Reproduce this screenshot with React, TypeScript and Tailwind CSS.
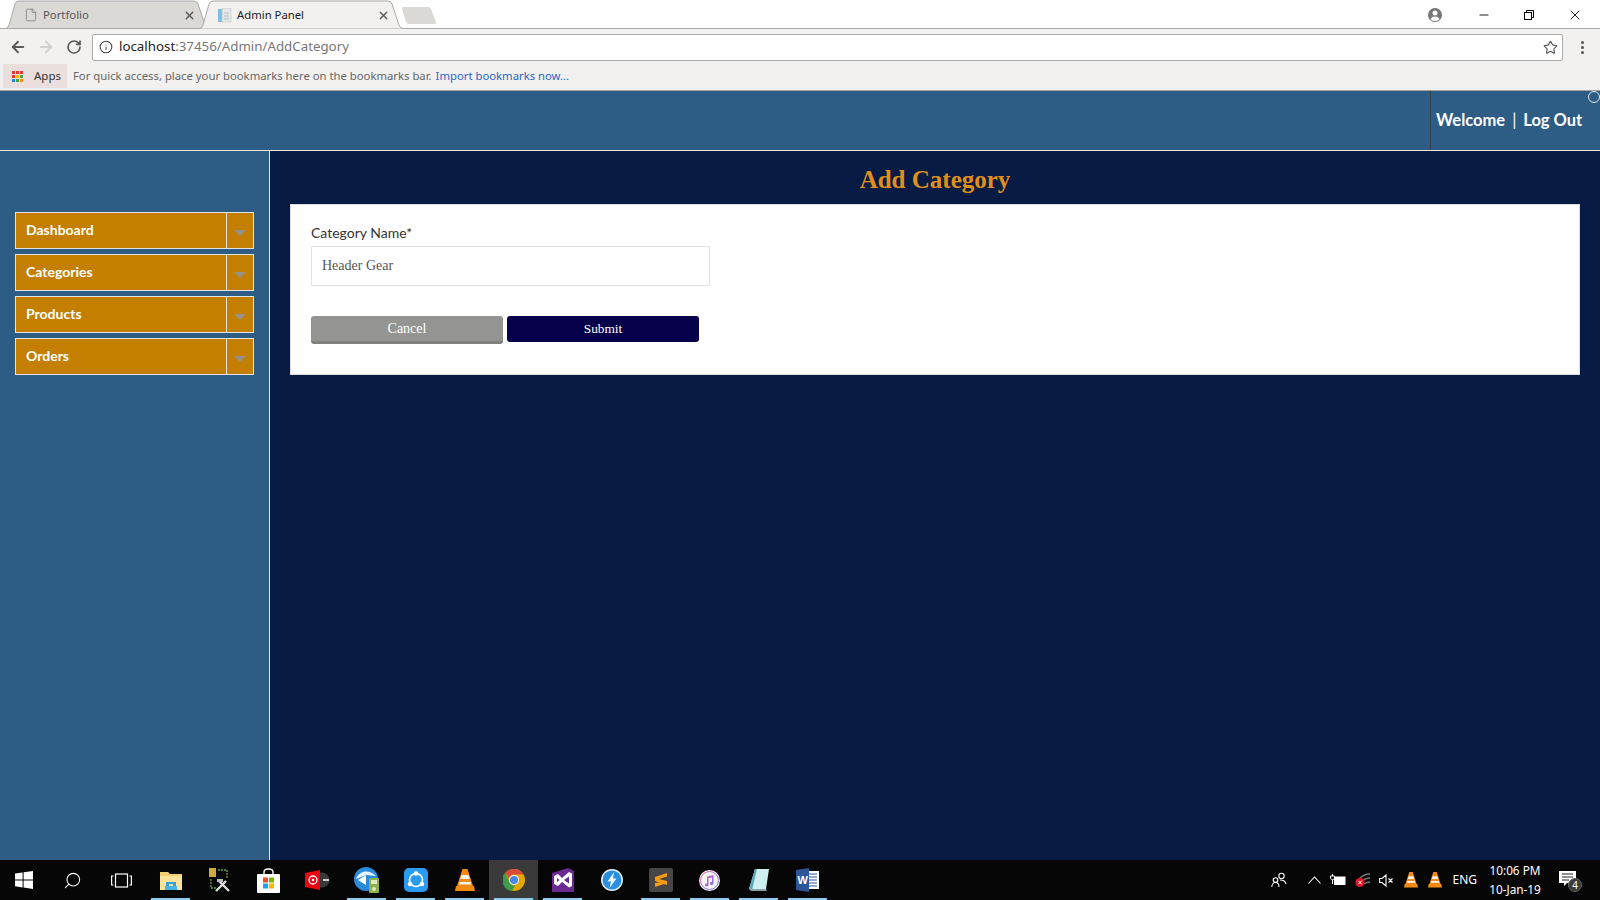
import React from "react";
import { ArrowLeft, ArrowRight, RotateCw, Info, Star, Minus, X, Search, File } from "lucide-react";

const ui = "font-['Noto_Sans','Open_Sans',sans-serif]";
const site = "font-['Lato','Noto_Sans',sans-serif]";

function TabShape({ fill, stroke }: { fill: string; stroke: string }) {
  return (
    <svg className="absolute inset-0 w-full h-full" viewBox="0 0 203 29" preserveAspectRatio="none">
      <path d="M0 28.5 Q2 28 3 25 L9 4 Q10 1 13 1 L188 1 Q191 1 192 4 L199 25 Q200 28 203 28.5" fill={fill} stroke={stroke} strokeWidth="1" />
    </svg>
  );
}

function Tab({ title, active, icon }: { title: string; active?: boolean; icon: React.ReactNode }) {
  return (
    <div className={`relative w-[203px] h-[29px] -mr-[9px] flex items-center pl-[18px] pr-[13px] pt-[1px] ${active ? "z-10" : ""}`}>
      <TabShape fill={active ? "#f2f1ef" : "#dbd9d5"} stroke="#a9a9a9" />
      <div className="relative flex items-center w-full">
        <span className="w-[19px] shrink-0">{icon}</span>
        <span className={`text-[11.3px] ${active ? "text-[#222]" : "text-[#555]"}`}>{title}</span>
        <X className="ml-auto text-[#555]" size={13} strokeWidth={2.5} />
      </div>
    </div>
  );
}

function MenuItem({ label }: { label: string }) {
  return (
    <div className="flex h-[37px] border border-[#e4e4e4] bg-[#c47f00]">
      <div className={`flex-1 flex items-center pl-[10px] text-white font-bold text-[14px] pb-[2px] ${site}`}>{label}</div>
      <div className="w-[27px] border-l border-[#e4e4e4] flex items-center justify-center pt-[4px]">
        <div className="w-0 h-0 border-l-[6px] border-r-[6px] border-t-[6px] border-l-transparent border-r-transparent border-t-[#97918a]" />
      </div>
    </div>
  );
}

function Cell({ children, active, bar }: { children?: React.ReactNode; active?: boolean; bar?: boolean }) {
  return (
    <div className={`relative w-[49px] h-full flex items-center justify-center ${active ? "bg-[#3a3a3a]" : ""}`}>
      {children}
      {bar && <div className="absolute bottom-0 left-[5px] right-[5px] h-[2px] bg-[#8ecbf0]" />}
    </div>
  );
}

const Win = () => (
  <svg width="18" height="18" viewBox="0 0 18 18" fill="#fff"><path d="M0 2.5 7.6 1.4V8.4H0ZM8.6 1.2 18 0V8.4H8.6ZM0 9.4H7.6V16.4L0 15.3ZM8.6 9.4H18V18L8.6 16.6Z" /></svg>
);
const TaskView = () => (
  <svg width="21" height="15" viewBox="0 0 21 15" fill="none" stroke="#fff" strokeWidth="1.2"><rect x="4.5" y="1" width="12" height="13" /><path d="M2.5 3H.6V12H2.5M18.5 3H20.4V12H18.5" /></svg>
);
const Folder = () => (
  <svg width="22" height="20" viewBox="0 0 22 20"><path d="M0 2h8l2 2h12v16H0z" fill="#f5cf73" /><path d="M0 6h22v14H0z" fill="#fbe39c" /><path d="M6 16v-4h10v4h-3v-2h-4v2z" fill="#2fa3dc" /><rect x="5" y="16" width="12" height="4" fill="#46b4e8" /></svg>
);
const Tools = () => (
  <svg width="24" height="26" viewBox="0 0 24 26" fill="none"><rect x="1" y="1" width="7" height="9" fill="#d3a93a" /><path d="M10 3h9v8M3 12v9h6" stroke="#5f9e3d" strokeWidth="1.4" strokeDasharray="2 1" /><path d="M8 24 18 14M11 14l10 10" stroke="#ddd" strokeWidth="2.4" /><path d="M9 12h6v3H9z" fill="#bbb" /></svg>
);
const Store = () => (
  <svg width="23" height="25" viewBox="0 0 23 25"><path d="M7 7V4q0-3 4.500-3T16 4v3" stroke="#fff" fill="none" strokeWidth="1.4" /><rect y="6" width="23" height="19" rx="1" fill="#fff" /><rect x="6" y="9.500" width="5" height="5" fill="#e8502a" /><rect x="12" y="9.500" width="5" height="5" fill="#7db600" /><rect x="6" y="15.500" width="5" height="5" fill="#1ea1e8" /><rect x="12" y="15.500" width="5" height="5" fill="#fbb900" /></svg>
);
const Groove = () => (
  <svg width="25" height="20" viewBox="0 0 25 20"><circle cx="17" cy="10" r="7.500" fill="#3a3a3a" /><rect x="18" y="9" width="6" height="2" fill="#ccc" /><path d="M0 3 15 0V20L0 17Z" fill="#f0000f" /><circle cx="8" cy="10" r="4" fill="none" stroke="#fff" strokeWidth="1.300" /><circle cx="8" cy="10" r="1.300" fill="#fff" /></svg>
);
const Sync = () => (
  <svg width="26" height="26" viewBox="0 0 26 26"><circle cx="12" cy="12" r="12" fill="#2a8bdb" /><path d="M2 12C5 3 16 2 22 9L12 8Z" fill="#e8f4fb" /><path d="M4 13 12 8V18Z" fill="#fff" /><rect x="15" y="11" width="10" height="15" rx="1" fill="#8fb04a" /><rect x="17" y="13" width="6" height="4" fill="#dfe8c4" /><circle cx="20" cy="22" r="2" fill="#dfe8c4" /></svg>
);
const Share = () => (
  <svg width="24" height="24" viewBox="0 0 24 24"><rect width="24" height="24" rx="5" fill="#2b9af3" /><circle cx="12" cy="12" r="6.500" fill="none" stroke="#fff" strokeWidth="1.600" /><circle cx="12" cy="5.500" r="2.300" fill="#fff" /><circle cx="6" cy="16" r="2.300" fill="#fff" /><circle cx="18" cy="16" r="2.300" fill="#fff" /></svg>
);
const Vlc = ({ s = 20 }: { s?: number }) => (
  <svg width={s} height={s * 1.1} viewBox="0 0 20 22"><path d="M7.500 0h5L18 17H2Z" fill="#f08a12" /><path d="M6.600 6h6.800l1.300 4H5.300ZM4.500 13h11L16 15.500H4Z" fill="#f3f3f3" /><path d="M1 17h18l1 5H0Z" fill="#f28c0e" /></svg>
);
const Chrome = () => (
  <svg width="22" height="22" viewBox="0 0 22 22"><circle cx="11" cy="11" r="11" fill="#e3a800" /><path d="M11 0A11 11 0 0 1 20.500 5.500H11A5.500 5.500 0 0 0 5.800 9.300L2 3.800A11 11 0 0 1 11 0Z" fill="#d94b3b" /><path d="M2 3.800 6.500 13A5.500 5.500 0 0 0 12 16.400L9 22A11 11 0 0 1 2 3.800Z" fill="#3f9c49" /><circle cx="11" cy="11" r="5" fill="#fff" /><circle cx="11" cy="11" r="4" fill="#4a86e8" /></svg>
);
const VS = () => (
  <svg width="22" height="24" viewBox="0 0 22 24"><path d="M0 5 16 0 22 3V24H0Z" fill="#6a2a8f" /><path d="M2 8 6 6 10 10 17 4 20 5.500V18L17 19.500 10 14 6 18 2 16ZM5 10V14L7.500 12ZM12 12 17 15.500V8.500Z" fill="#fff" /></svg>
);
const Bolt = () => (
  <svg width="22" height="22" viewBox="0 0 22 22"><circle cx="11" cy="11" r="11" fill="#e7eef5" /><circle cx="11" cy="11" r="9.500" fill="#2a8fe0" /><path d="M13 3 6.500 12.500H10L8.500 19 15.500 9.500H12Z" fill="#e9f4fb" /></svg>
);
const Sublime = () => (
  <svg width="24" height="24" viewBox="0 0 24 24"><rect width="24" height="24" rx="2" fill="#464646" /><path d="M18 5 6 9v4l12 4v-4L10 11l8-2.500ZM6 19l12-4v-2L6 15Z" fill="#f59b12" /></svg>
);
const Itunes = () => (
  <svg width="21" height="21" viewBox="0 0 21 21"><defs><linearGradient id="it" x1="0" y1="0" x2="1" y2="1"><stop offset="0" stopColor="#f25ca8" /><stop offset="1" stopColor="#6a7be8" /></linearGradient></defs><circle cx="10.500" cy="10.500" r="10.500" fill="#f4f4f6" /><circle cx="10.500" cy="10.500" r="9" fill="none" stroke="url(#it)" strokeWidth="1" /><path d="M8 6.500 14.500 5V13.500A1.800 1.500 0 1 1 13 12V7.500L9.500 8.300V15A1.800 1.500 0 1 1 8 13.500Z" fill="url(#it)" /></svg>
);
const Notes = () => (
  <svg width="22" height="24" viewBox="0 0 22 24"><path d="M7 1h14l-3 20H1Z" fill="#cfeef0" /><path d="M1 21 7 1 9 1 4 22Z" fill="#5aa9b5" /><path d="M1 21H18L19 23H3Z" fill="#8aa3a8" /></svg>
);
const Word = () => (
  <svg width="23" height="24" viewBox="0 0 23 24"><rect x="8" y="3" width="15" height="18" fill="#fff" /><path d="M11 6h10M11 9h10M11 12h10M11 15h10M11 18h10" stroke="#2b579a" strokeWidth="1" /><path d="M0 2 13 0V24L0 22Z" fill="#2b579a" /><text x="1.500" y="16" fontSize="11" fontWeight="700" fill="#fff" fontFamily="Liberation Sans, sans-serif">W</text></svg>
);
const People = () => (
  <svg width="16" height="16" viewBox="0 0 16 16" fill="none" stroke="#fff" strokeWidth="1.100"><circle cx="10.500" cy="4" r="2.700" /><circle cx="4.500" cy="8" r="2.300" /><path d="M.8 15c0-3 2-4.500 3.700-4.500S8 12 8 15M9 8c3 0 5.500 1 6 4" /></svg>
);
const Profile = () => (
  <svg width="14" height="14" viewBox="0 0 14 14"><circle cx="7" cy="7" r="7" fill="#767676" /><circle cx="7" cy="5" r="2.500" fill="#fff" /><path d="M2.500 11.200C3.300 9.300 5 8.600 7 8.600s3.700.7 4.500 2.600A6 6 0 0 1 7 13a6 6 0 0 1-4.500-1.800Z" fill="#fff" /></svg>
);
const Tray = {
  Up: () => <svg width="13" height="8" viewBox="0 0 13 8" fill="none" stroke="#fff" strokeWidth="1.100"><path d="M.5 7.500 6.500 1l6 6.500" /></svg>,
  Battery: () => <svg width="16" height="12" viewBox="0 0 16 12" fill="none"><rect x="4.500" y="3" width="10.500" height="7.500" fill="#fff" stroke="#fff" /><path d="M2.500 0v2M0.500 2h4v2c0 1-1 1.500-2 1.500s-2-.5-2-1.500zM2.500 6v4" stroke="#fff" /></svg>,
  Wifi: () => <svg width="16" height="14" viewBox="0 0 16 14" fill="none"><path d="M4 6Q9 1 15 1M6 9Q10 5 15 5M9 11Q12 9 15 9" stroke="#777" strokeWidth="1.300" /><circle cx="5" cy="9.500" r="4.500" fill="#e81123" /><path d="M3.200 7.700l3.600 3.600M6.800 7.700l-3.600 3.600" stroke="#fff" /></svg>,
  Mute: () => <svg width="15" height="13" viewBox="0 0 15 13" fill="none" stroke="#fff" strokeWidth="1.100"><path d="M.6 4.500H3L7 1V12L3 8.500H.6ZM9.500 4.500l4 4M13.500 4.500l-4 4" /></svg>,
};

export default function App() {
  return (
    <div className={`w-[1600px] h-[900px] flex flex-col overflow-hidden ${ui}`}>
      {/* Tab strip */}
      <div className="h-[29px] bg-white flex items-end relative shrink-0 pl-[6px]">
        <Tab title="Portfolio" icon={<File size={14} className="text-[#777]" strokeWidth={1.300} />} />
        <Tab
          title="Admin Panel"
          active
          icon={
            <svg width="14" height="15" viewBox="0 0 14 15"><rect x="0" y="1" width="5" height="13" fill="#7cc0e8" /><rect x="4" y="0" width="9" height="14" fill="#e4e7ea" stroke="#bfc5ca" strokeWidth=".6" /><path d="M6 5h5M6 8h5M6 11h5" stroke="#b8bec4" /></svg>
          }
        />
        <svg className="ml-[7px] mb-[4px]" width="36" height="19" viewBox="0 0 36 19"><path d="M3 1h24q2 0 3 2l5 13q.5 2-2 2H8q-2 0-3-2L1 3Q.5 1 3 1Z" fill="#dbd9d5" /></svg>
        <div className="absolute bottom-0 left-0 right-0 h-px bg-[#a9a9a9]" />
        <div className="ml-auto self-start flex items-center h-[28px] relative z-10 pr-[3px] pt-[1px]">
          <span className="mr-[19px]"><Profile /></span>
          <div className="w-[45px] flex justify-center"><Minus size={14} className="text-black" strokeWidth={1.500} /></div>
          <div className="w-[46px] flex justify-center">
            <svg width="10" height="10" viewBox="0 0 10 10" fill="none" stroke="#000"><rect x=".5" y="2.500" width="7" height="7" /><path d="M2.500 2.500V.5h7v7H7.500" /></svg>
          </div>
          <div className="w-[45px] flex justify-center"><X size={16} className="text-black" strokeWidth={1.300} /></div>
        </div>
      </div>

      {/* Toolbar */}
      <div className="h-[33px] bg-[#f2f1ef] flex items-center shrink-0 pt-[3px]">
        <ArrowLeft size={18} strokeWidth={2.500} className="ml-[9px] text-[#5a5a5a]" />
        <ArrowRight size={18} strokeWidth={2.500} className="ml-[10px] text-[#d0d0d0]" />
        <RotateCw size={16} strokeWidth={2.500} className="ml-[11px] text-[#5a5a5a]" />
        <div className="ml-[10px] w-[1471px] h-[27px] bg-white border border-[#ababab] rounded-[2px] flex items-center pl-[6px] pr-[4px]">
          <Info size={14} className="text-[#444]" strokeWidth={1.800} />
          <span className="ml-[6px] text-[13.3px] text-[#222]">localhost<span className="text-[#777]">:37456/Admin/AddCategory</span></span>
          <Star size={15} className="ml-auto text-[#555]" strokeWidth={1.800} />
        </div>
        <div className="ml-[18px] flex flex-col gap-[2px]">
          <span className="w-[3px] h-[3px] rounded-full bg-[#555]" />
          <span className="w-[3px] h-[3px] rounded-full bg-[#555]" />
          <span className="w-[3px] h-[3px] rounded-full bg-[#555]" />
        </div>
      </div>

      {/* Bookmarks bar */}
      <div className="h-[29px] bg-[#f2f1ef] flex items-center border-b border-[#a3a3a3] shrink-0 pl-[3px]">
        <div className="h-[24px] w-[64px] bg-[#eadfdc] flex items-center pl-[9px] gap-[11px]">
          <div className="grid grid-cols-3 gap-[1px] w-[11px] shrink-0">
            {["#e53935", "#e53935", "#e53935", "#e53935", "#fbb900", "#43a047", "#1e88e5", "#43a047", "#fb8c00"].map((c, i) => (
              <span key={i} className="w-[3px] h-[3px]" style={{ backgroundColor: c }} />
            ))}
          </div>
          <span className="text-[11.5px] text-[#333]">Apps</span>
        </div>
        <span className="ml-[6px] text-[11.3px] text-[#666]">For quick access, place your bookmarks here on the bookmarks bar.</span>
        <span className="ml-[4px] text-[11.3px] text-[#2a67c7]">Import bookmarks now...</span>
      </div>

      {/* Page header */}
      <div className="h-[60px] bg-[#2d5c84] border-b border-[#e6e6e6] flex justify-end shrink-0 relative">
        <div className={`w-[170px] border-l border-[#3a3f45] flex items-center pl-[5px] text-white text-[16.5px] font-bold pb-[1px] ${site}`}>
          <span>Welcome</span>
          <span className="mx-[7px] font-normal">|</span>
          <span>Log Out</span>
        </div>
        <div className="absolute right-0 top-0 w-[12px] h-[12px] rounded-full border border-[#dfe8ef]" />
      </div>

      {/* Body */}
      <div className="flex-1 flex min-h-0">
        <aside className="w-[270px] shrink-0 bg-[#2d5c84] border-r border-[#e6e6e6] pt-[61px] pl-[15px] pr-[15px] flex flex-col gap-[5px]">
          <MenuItem label="Dashboard" />
          <MenuItem label="Categories" />
          <MenuItem label="Products" />
          <MenuItem label="Orders" />
        </aside>
        <main className="flex-1 bg-[#071b45] px-[20px]">
          <h1 className="h-[53px] pt-[5px] flex items-center justify-center text-[25px] font-bold text-[#e0901a] font-['Liberation_Serif',serif]">Add Category</h1>
          <div className="bg-white border border-[#dcdcdc] h-[171px] pt-[20px] px-[20px]">
            <label className={`block text-[14px] leading-[16px] text-[#333] ${site}`}>Category Name*</label>
            <input
              readOnly
              value="Header Gear"
              className="block mt-[5px] w-[399px] h-[40px] border border-[#e3e3e3] px-[10px] text-[14px] text-[#555] outline-none font-['Liberation_Serif',serif]"
            />
            <div className="flex gap-[4px] mt-[30px] items-start font-['Liberation_Serif',serif]">
              <button className="w-[192px] h-[28px] bg-[#949592] border-b-[3px] border-[#80817d] rounded-[3px] text-[14px] text-white">Cancel</button>
              <button className="w-[192px] h-[26px] bg-[#07004a] rounded-[3px] text-[13.33px] text-white">Submit</button>
            </div>
          </div>
        </main>
      </div>

      {/* Taskbar */}
      <div className="h-[40px] bg-[#060606] flex items-stretch shrink-0 text-white -ml-[1px]">
        <Cell><Win /></Cell>
        <Cell><Search size={19} className="text-white -scale-x-100" strokeWidth={1.300} /></Cell>
        <Cell><TaskView /></Cell>
        <Cell bar><Folder /></Cell>
        <Cell><Tools /></Cell>
        <Cell><Store /></Cell>
        <Cell><Groove /></Cell>
        <Cell bar><Sync /></Cell>
        <Cell bar><Share /></Cell>
        <Cell bar><Vlc /></Cell>
        <Cell active bar><Chrome /></Cell>
        <Cell bar><VS /></Cell>
        <Cell><Bolt /></Cell>
        <Cell bar><Sublime /></Cell>
        <Cell bar><Itunes /></Cell>
        <Cell bar><Notes /></Cell>
        <Cell bar><Word /></Cell>
        <div className="ml-auto flex items-center">
          <People />
          <span className="ml-[21px]"><Tray.Up /></span>
          <span className="ml-[9px]"><Tray.Battery /></span>
          <span className="ml-[9px]"><Tray.Wifi /></span>
          <span className="ml-[8px]"><Tray.Mute /></span>
          <span className="ml-[10px]"><Vlc s={14} /></span>
          <span className="ml-[10px]"><Vlc s={14} /></span>
          <span className="ml-[10px] text-[12px]">ENG</span>
          <div className="ml-[12px] w-[52px] flex flex-col items-center text-[11.8px] leading-[19px] whitespace-nowrap">
            <span>10:06 PM</span>
            <span>10-Jan-19</span>
          </div>
          <div className="relative ml-[18px] mr-[19px] w-[22px] h-[22px]">
            <svg width="17" height="15" viewBox="0 0 17 15" className="mt-[2px]"><path d="M0 0H17V12H8L5 15V12H0Z" fill="#fff" /><path d="M3 3h11M3 6h11M3 9h7" stroke="#222" /></svg>
            <span className="absolute -right-[1px] -bottom-[1px] w-[14px] h-[14px] rounded-full bg-[#3a3a3a] border border-[#666] text-[10px] leading-[12px] text-center">4</span>
          </div>
        </div>
      </div>
    </div>
  );
}
